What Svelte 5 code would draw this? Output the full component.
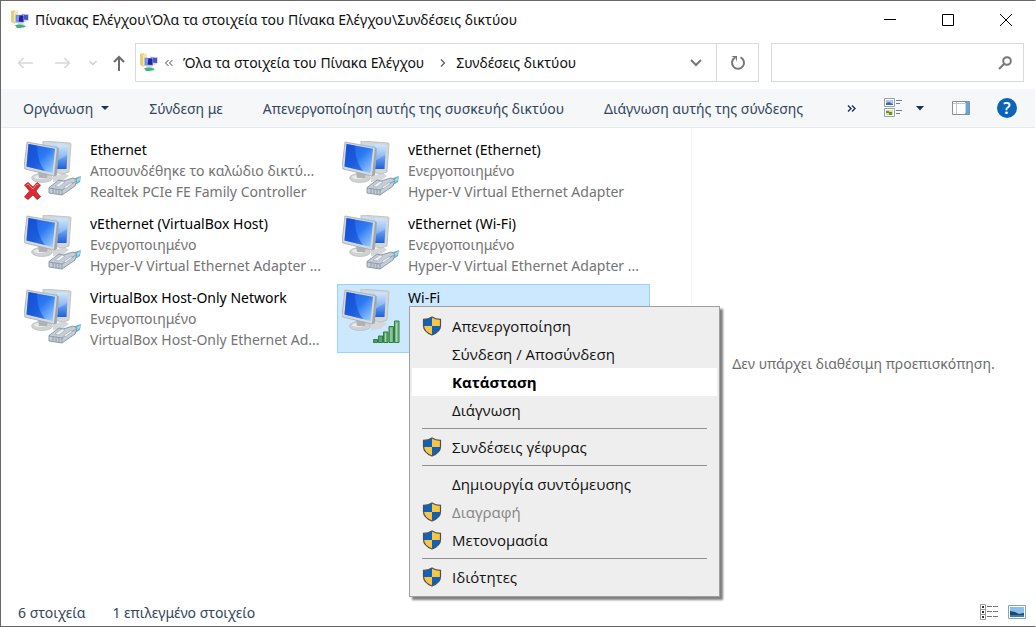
<script>
  /** Network connections folder window with the adapter context menu open. */

  const connections = [
    {
      name: "Ethernet",
      status: "Αποσυνδέθηκε το καλώδιο δικτύ...",
      device: "Realtek PCIe FE Family Controller",
      unplugged: true,
    },
    {
      name: "vEthernet (Ethernet)",
      status: "Ενεργοποιημένο",
      device: "Hyper-V Virtual Ethernet Adapter",
    },
    {
      name: "vEthernet (VirtualBox Host)",
      status: "Ενεργοποιημένο",
      device: "Hyper-V Virtual Ethernet Adapter ...",
    },
    {
      name: "vEthernet (Wi-Fi)",
      status: "Ενεργοποιημένο",
      device: "Hyper-V Virtual Ethernet Adapter ...",
    },
    {
      name: "VirtualBox Host-Only Network",
      status: "Ενεργοποιημένο",
      device: "VirtualBox Host-Only Ethernet Ad...",
    },
    { name: "Wi-Fi", wireless: true },
  ];

  const menu = [
    [
      { label: "Απενεργοποίηση", shield: true },
      { label: "Σύνδεση / Αποσύνδεση" },
      { label: "Κατάσταση", primary: true },
      { label: "Διάγνωση" },
    ],
    [{ label: "Συνδέσεις γέφυρας", shield: true }],
    [
      { label: "Δημιουργία συντόμευσης" },
      { label: "Διαγραφή", shield: true, disabled: true },
      { label: "Μετονομασία", shield: true },
    ],
    [{ label: "Ιδιότητες", shield: true }],
  ];

  let selected = $state(5);
  let query = $state("");
</script>

{#snippet folderIcon()}
  <svg class="folder-icon" width="20" height="20" viewBox="0 0 20 20" aria-hidden="true">
    <path d="M1 1l4-1v14l-4-2z" fill="#e3cf7d" />
    <path d="M4 1.500L8 0v10l-4 3z" fill="#f3e8ad" />
    <path d="M11 3.500l8 .5v6l-4 2-4-1z" fill="#cfd6e4" />
    <path d="M12 4.500l6 .5v5l-6-.5z" fill="#4256c8" />
    <path d="M5 4.500l9 .5v8H5z" fill="#b9c2d4" />
    <path d="M6.500 5l7 .5v6.500l-7-.5z" fill="#1a22ac" />
    <path d="M6.500 5l3 .3L8.500 12l-2-.2z" fill="#7f98ec" />
    <path d="M8 13h5l1 2H7z" fill="#d5d9de" />
    <path d="M5 15l5-.5 5 1 .5 1.500-5 1L7 18z" fill="#3cb47b" />
  </svg>
{/snippet}

{#snippet shieldIcon()}
  <svg width="20" height="20" viewBox="0 0 20 20" aria-hidden="true">
    <path d="M10 1C7.500 2.600 4.500 3.300 1.500 3.400V10H10z" fill="#0f62b5" />
    <path d="M10 1c2.500 1.600 5.500 2.300 8.500 2.400V10H10z" fill="#f8c544" />
    <path d="M1.500 10c.3 4.200 4.200 7.200 8.500 9v-9z" fill="#f8c544" />
    <path d="M18.500 10c-.3 4.200-4.200 7.200-8.500 9v-9z" fill="#0f62b5" />
    <path
      d="M10 1C7.500 2.600 4.500 3.300 1.500 3.400V9.500c0 4.500 4.200 7.800 8.500 9.500 4.300-1.700 8.500-5 8.500-9.500V3.400C15.500 3.300 12.500 2.600 10 1z"
      fill="none"
      stroke="#4b4f56"
      stroke-width="1.200"
    />
  </svg>
{/snippet}

{#snippet adapterIcon(item)}
  <svg class="adapter-icon" width="60" height="60" viewBox="0 0 60 60" aria-hidden="true">
    <!-- rear monitor -->
    <path d="M29 35l12-3 4 3-7 5-9 1z" fill="#d5d7d9" />
    <path d="M19 0l27.500 2 .5 1-2 28-6 2-20-4z" fill="#d3d7da" stroke="#b7bbbf" stroke-width=".8" />
    <path d="M21 2.500l23 1.500-1.500 24L22 28z" fill="url(#screen-rear)" />
    <path d="M33 3.300L44 4l-.6 10L33 20z" fill="#fff" opacity=".25" />
    <!-- front monitor -->
    <ellipse cx="18" cy="37" rx="10.500" ry="4.500" fill="#cfd1d3" stroke="#b3b6b9" stroke-width=".6" />
    <ellipse cx="16" cy="36" rx="6" ry="2" fill="#e9eaeb" />
    <path d="M14 30l10 2-1 5h-8z" fill="#aeb3b6" />
    <path d="M3 1l30 5.500 1.500 1L32.500 34l-2.500 1L1 28 0 26.500z" fill="#d6dadd" stroke="#a3a8ad" stroke-width=".8" />
    <path d="M33 6.500l1.500 1L32.500 34l-2.500 1z" fill="#9fa6ad" />
    <path d="M4.500 3L31 7.800 28.500 32 2.500 25.500z" fill="url(#screen-front)" />
    <path d="M4.500 3L13 4.500C13 14 15 22 21 30.100L2.500 25.500z" fill="#0b3fc8" opacity=".5" />
    {#if item.wireless}
      <path d="M31.500 50.500h4v3h-4zM36.500 47h4v6.500h-4zM41.500 43h4.500v10.500h-4.500zM47 37.500h4.500v16H47zM52.500 32h4.500v21.500h-4.500z" fill="url(#signal)" stroke="#2f7d46" stroke-width="1" />
      <path d="M49 39v14M54.500 34v19M43.500 44v9" stroke="#b5dfba" stroke-width=".8" />
    {:else}
      <path d="M45 39l12-4-1 6-8 5z" fill="#5fb5cc" />
      <path d="M49 40l8-4-2 4-5 3z" fill="#a5dbe6" />
      <path d="M25 46.500L35 39l4 1 10-3 4 2-2 6-13 9-13-2z" fill="#c5ced8" stroke="#8692a0" stroke-width=".9" />
      <path d="M25 47l13 2 14-9M38 49v5M29 48v4M32 48.500v4M35 49v4" fill="none" stroke="#8893a0" stroke-width=".9" />
      <path d="M31 45l7-5 3 1-6 5zM40 46l8-5v2l-7 5z" fill="#eef2f6" stroke="#97a2af" stroke-width=".6" />
    {/if}
    {#if item.unplugged}
      <path d="M.5 44l3.500-2.500 5 4.500 4-4.500 3.500 2.500-4.500 6 4.500 6-3.500 2.500-4-4.500-5 4.500L.5 56l5-6z" fill="#dc2a32" stroke="#b0252b" stroke-width=".8" />
      <path d="M2.500 44l1.500-1 5 5 4-5 1.500 1" fill="none" stroke="#f28a8e" stroke-width="1" />
    {/if}
  </svg>
{/snippet}

<svg class="defs" width="0" height="0" aria-hidden="true">
  <defs>
    <linearGradient id="screen-front" x1="0" y1="0" x2="1" y2="1">
      <stop offset="0" stop-color="#1c5ce4" />
      <stop offset=".5" stop-color="#2c7af2" />
      <stop offset="1" stop-color="#a5d4ff" />
    </linearGradient>
    <linearGradient id="screen-rear" x1="0" y1="0" x2="0" y2="1">
      <stop offset="0" stop-color="#c6e4fb" />
      <stop offset=".5" stop-color="#6ba6f2" />
      <stop offset="1" stop-color="#1f60dc" />
    </linearGradient>
    <linearGradient id="signal" x1="0" y1="0" x2="1" y2="0">
      <stop offset="0" stop-color="#4e9c60" />
      <stop offset="1" stop-color="#7cbf88" />
    </linearGradient>
  </defs>
</svg>

<div class="window">
  <header class="titlebar">
    {@render folderIcon()}
    <h1>Πίνακας Ελέγχου\Όλα τα στοιχεία του Πίνακα Ελέγχου\Συνδέσεις δικτύου</h1>
    <button class="caption" aria-label="Ελαχιστοποίηση">
      <svg width="12" height="12"><path d="M0 5.500h12" stroke="#000" /></svg>
    </button>
    <button class="caption" aria-label="Μεγιστοποίηση">
      <svg width="12" height="12"><path d="M.5.5h11v11H.5z" fill="none" stroke="#000" /></svg>
    </button>
    <button class="caption" aria-label="Κλείσιμο">
      <svg width="12" height="12"><path d="M0 0l12 12M12 0L0 12" stroke="#000" /></svg>
    </button>
  </header>

  <nav class="navbar">
    <div class="history">
      <button class="back" aria-label="Πίσω" disabled>
        <svg width="16" height="12"><path d="M16 6H1.500M6.500 1l-5 5 5 5" fill="none" stroke="#d8d8d8" stroke-width="1.500" /></svg>
      </button>
      <button class="forward" aria-label="Εμπρός" disabled>
        <svg width="16" height="12"><path d="M0 6h14.500M9.500 1l5 5-5 5" fill="none" stroke="#d8d8d8" stroke-width="1.500" /></svg>
      </button>
      <button class="recent" aria-label="Πρόσφατες θέσεις" disabled>
        <svg width="8" height="6"><path d="M.5 1L4 4.500 7.500 1" fill="none" stroke="#cfcfcf" stroke-width="1.500" /></svg>
      </button>
      <button class="up" aria-label="Επάνω">
        <svg width="12" height="16"><path d="M6 16V2M1 7l5-5 5 5" fill="none" stroke="#6c6c6c" stroke-width="2" /></svg>
      </button>
    </div>
    <div class="address">
      {@render folderIcon()}
      <svg class="overflow" width="8" height="8" aria-hidden="true"><path d="M3.500 1l-3 3 3 3M7.500 1l-3 3 3 3" fill="none" stroke="#444" /></svg>
      <a href="#all">Όλα τα στοιχεία του Πίνακα Ελέγχου</a>
      <svg class="crumb" width="6" height="8" aria-hidden="true"><path d="M1 .5L4.500 4 1 7.500" fill="none" stroke="#555" stroke-width="1.200" /></svg>
      <a class="current" href="#network">Συνδέσεις δικτύου</a>
      <button class="drop" aria-label="Προηγούμενες θέσεις">
        <svg width="12" height="8"><path d="M1 1l5 5 5-5" fill="none" stroke="#777" stroke-width="2" /></svg>
      </button>
      <button class="refresh" aria-label="Ανανέωση">
        <svg width="16" height="16"><path d="M10.500 2.300A6 6 0 1 1 4.800 2.700" fill="none" stroke="#777" stroke-width="2" /><path d="M1 1h6v6L5.500 3z" fill="#777" /></svg>
      </button>
    </div>
    <label class="search">
      <input type="text" aria-label="Αναζήτηση" bind:value={query} />
      <svg width="14" height="14" aria-hidden="true"><circle cx="9" cy="5" r="3.800" fill="none" stroke="#777" stroke-width="2" /><path d="M6.300 7.700L1 13" stroke="#777" stroke-width="2" /></svg>
    </label>
  </nav>

  <div class="commands">
    <button>
      Οργάνωση
      <svg class="caret" width="8" height="4"><path d="M0 0h8L4 4z" fill="#1e3350" /></svg>
    </button>
    <button>Σύνδεση με</button>
    <button>Απενεργοποίηση αυτής της συσκευής δικτύου</button>
    <button>Διάγνωση αυτής της σύνδεσης</button>
    <button class="more" aria-label="Περισσότερα">
      <svg width="10" height="7"><path d="M1 .5l3 3-3 3M5 .5l3 3-3 3" fill="none" stroke="#1e3350" stroke-width="1.400" /></svg>
    </button>
    <div class="view-tools">
      <button aria-label="Αλλαγή προβολής">
        <svg width="18" height="20">
          <path d="M.5.5h10v8H.5zM.5 10.500h10v8H.5z" fill="#fff" stroke="#97a0a8" />
          <path d="M2 2h7v5H2z" fill="#a9c9f3" /><path d="M2 5l3-1 4 2v1H2z" fill="#4c65a8" />
          <path d="M2 12h7v5H2z" fill="#dbe29c" /><path d="M2 13h3v2H2zM5 14h3v3H5z" fill="#6c8d35" />
          <path d="M12 2.500h6M12 5.500h4M12 12.500h6M12 15.500h4" stroke="#6f7f90" />
        </svg>
      </button>
      <button class="view-drop" aria-label="Περισσότερες επιλογές">
        <svg width="8" height="5"><path d="M0 0h8L4 4.500z" fill="#1e3350" /></svg>
      </button>
      <button class="pane-toggle" aria-label="Παράθυρο προεπισκόπησης">
        <svg width="18" height="14">
          <path d="M.5.5h17v13H.5z" fill="#fff" stroke="#84909c" />
          <path d="M4.500 1v12" stroke="#c0c7ce" /><path d="M1 2.500h12" stroke="#c0c7ce" />
          <path d="M13 1h4v12h-4z" fill="#63a5dc" /><path d="M13 2h1v10h-1z" fill="#b8daf3" />
        </svg>
      </button>
      <button class="help" aria-label="Βοήθεια">?</button>
    </div>
  </div>

  <main>
    <section class="connections">
      {#each connections as item, i}
        <div class="cell">
          <button class="connection" class:selected={i === selected} onclick={() => (selected = i)}>
            {@render adapterIcon(item)}
            <span class="lines">
              <span class="name">{item.name}</span>
              {#if item.status}
                <span>{item.status}</span>
                <span>{item.device}</span>
              {/if}
            </span>
          </button>
          {#if item.wireless}
            <div class="context-menu" role="menu">
              {#each menu as group, g}
                {#if g > 0}<hr />{/if}
                {#each group as entry}
                  <button role="menuitem" class:primary={entry.primary} disabled={entry.disabled}>
                    <span class="slot">
                      {#if entry.shield}{@render shieldIcon()}{/if}
                    </span>
                    {entry.label}
                  </button>
                {/each}
              {/each}
            </div>
          {/if}
        </div>
      {/each}
    </section>
    <aside>Δεν υπάρχει διαθέσιμη προεπισκόπηση.</aside>
  </main>

  <footer>
    <span>6 στοιχεία</span>
    <span>1 επιλεγμένο στοιχείο</span>
    <div class="modes">
      <button aria-label="Λεπτομέρειες">
        <svg width="18" height="16">
          <path d="M.5.5h5v15h-5zM.5 5.500h5M.5 10.500h5" fill="#fff" stroke="#9a9a9a" />
          <path d="M2 2h2v2H2zM2 7h2v2H2zM2 12h2v2H2z" fill="#333" />
          <path d="M7 2.500h5M13 2.500h5M7 7.500h5M13 7.500h5M7 12.500h5M13 12.500h5" stroke="#777" />
        </svg>
      </button>
      <button aria-label="Μεγάλα εικονίδια">
        <svg width="18" height="14">
          <path d="M.5.5h17v13H.5z" fill="#fff" stroke="#83a4c3" />
          <path d="M2 2h14v10H2z" fill="#8cc0ec" />
          <path d="M2 6l5 1 4 2 5-1v4H2z" fill="#20485e" />
          <path d="M2 10h14v2H2z" fill="#3f79b4" />
        </svg>
      </button>
    </div>
  </footer>
</div>

<style>
  :global(body) {
    margin: 0;
    background: #fff;
  }
  .defs { display: block; }
  .window {
    display: flex;
    flex-direction: column;
    box-sizing: border-box;
    min-height: 100vh;
    border: 1px solid #686868;
    border-right-color: #fff;
    background: #fff;
    color: #111;
    font-family: "Noto Sans", "Open Sans", sans-serif;
    font-size: 14px;
  }
  button {
    display: flex;
    align-items: center;
    justify-content: center;
    padding: 0;
    border: none;
    background: transparent;
    color: inherit;
    font: inherit;
    white-space: nowrap;
  }
  svg { flex-shrink: 0; }
  a {
    color: inherit;
    text-decoration: none;
    white-space: nowrap;
  }

  .titlebar {
    display: flex;
    align-items: center;
    height: 37px;
    padding-left: 9px;
  }
  .titlebar h1 {
    flex: 1;
    margin: 0 0 0 5px;
    font-size: 14px;
    font-weight: 400;
    white-space: nowrap;
  }
  .caption {
    width: 58px;
    height: 36px;
  }

  .navbar {
    display: flex;
    padding: 5px 11px 7px 0;
  }
  .history {
    display: flex;
    align-items: center;
    padding-right: 6px;
  }
  .history button { height: 38px; }
  .back { width: 48px; }
  .forward { width: 28px; }
  .recent { width: 32px; }
  .up { width: 20px; }
  .address {
    display: flex;
    flex: 1;
    align-items: center;
    box-sizing: border-box;
    height: 39px;
    padding-left: 3px;
    border: 1px solid #d9d9d9;
  }
  .overflow { margin: 0 10px 0 6px; }
  .crumb { margin: 0 10px 0 16px; }
  .current { flex: 1; }
  .address button { height: 37px; }
  .drop { width: 40px; }
  .refresh {
    width: 42px;
    border-left: 1px solid #d9d9d9;
  }
  .search {
    display: flex;
    align-items: center;
    box-sizing: border-box;
    width: 253px;
    margin-left: 12px;
    padding-right: 11px;
    border: 1px solid #d9d9d9;
  }
  .search input {
    flex: 1;
    min-width: 0;
    border: none;
    outline: none;
    font: inherit;
  }

  .commands {
    display: flex;
    align-items: center;
    gap: 40px;
    height: 38px;
    padding: 0 18px 0 22px;
    border-bottom: 1px solid #e6eaee;
    background: #f5f7f9;
    color: #34465c;
  }
  .caret { margin-left: 8px; }
  .more { margin-left: 4px; }
  .view-tools {
    display: flex;
    align-items: center;
    margin-left: auto;
  }
  .commands .more { margin-right: -20px; }
  .view-drop { margin-left: 14px; }
  .pane-toggle { margin-left: 28px; }
  .help {
    width: 20px;
    height: 20px;
    margin-left: 27px;
    border-radius: 50%;
    background: #0a64b8;
    color: #fff;
    font-size: 16px;
    font-weight: 600;
  }

  main {
    display: flex;
    flex: 1;
  }
  .connections {
    display: grid;
    flex: 1;
    grid-template-columns: 313px 313px;
    align-content: start;
    gap: 5px;
    padding: 8px 0 0 18px;
  }
  .cell { position: relative; }
  .connection {
    align-items: flex-start;
    justify-content: flex-start;
    box-sizing: border-box;
    width: 100%;
    height: 69px;
    padding: 2px 0 0 4px;
    border: 1px solid transparent;
    text-align: left;
  }
  .connection.selected {
    border-color: #99d1ff;
    background: #cce8ff;
  }
  .adapter-icon { margin: 2px 6px 0 0; }
  .lines {
    display: flex;
    flex-direction: column;
    color: #747474;
    line-height: 21px;
  }
  .name { color: #000; }

  .context-menu {
    position: absolute;
    z-index: 1;
    top: 22px;
    left: 72px;
    box-sizing: border-box;
    width: 311px;
    padding: 5px 2px;
    border: 1px solid #a0a0a0;
    background: #eee;
    box-shadow: 3px 3px 2px rgba(0, 0, 0, 0.5);
    color: #111;
    font-family: "Open Sans", "Noto Sans", sans-serif;
    font-size: 15px;
  }
  .context-menu button {
    justify-content: flex-start;
    width: 100%;
    height: 28px;
  }
  .context-menu .primary {
    background: #fff;
    color: #000;
    font-weight: 700;
  }
  .context-menu button:disabled { color: #858585; }
  .slot {
    display: flex;
    width: 30px;
    padding-left: 10px;
  }
  .context-menu hr {
    height: 1px;
    margin: 4px 10px;
    border: none;
    background: #919191;
  }

  aside {
    display: flex;
    align-items: center;
    justify-content: center;
    width: 343px;
    border-left: 1px solid #f7f7f7;
    color: #6d6d6d;
    white-space: nowrap;
  }

  footer {
    display: flex;
    align-items: center;
    gap: 27px;
    height: 28px;
    padding: 0 9px 0 17px;
    color: #34465c;
  }
  .modes {
    display: flex;
    gap: 10px;
    margin-left: auto;
  }
</style>
